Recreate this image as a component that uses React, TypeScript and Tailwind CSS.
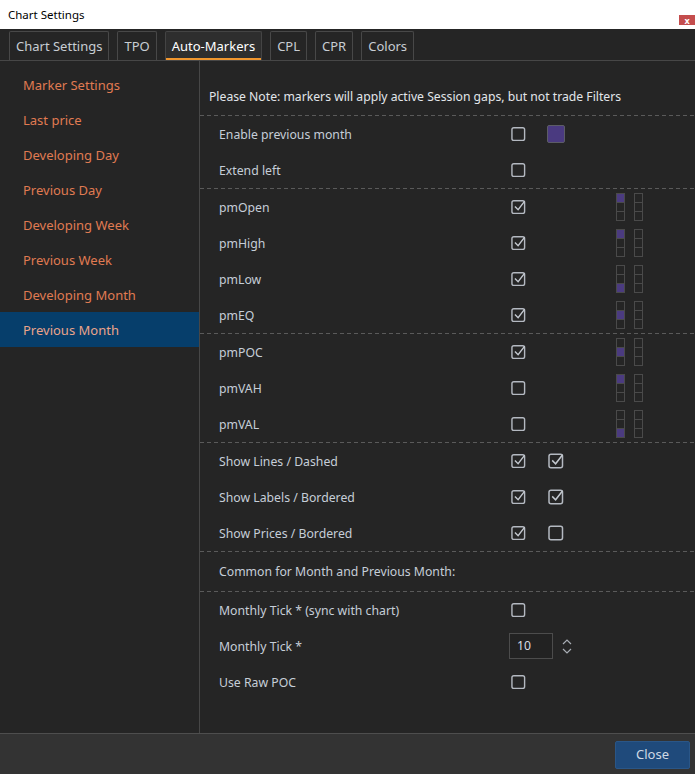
import React from "react";

const font = { fontFamily: '"Segoe UI", "Noto Sans", "Open Sans", sans-serif' };

const sideItems = [
  "Marker Settings",
  "Last price",
  "Developing Day",
  "Previous Day",
  "Developing Week",
  "Previous Week",
  "Developing Month",
  "Previous Month",
];

const tabs = ["Chart Settings", "TPO", "Auto-Markers", "CPL", "CPR", "Colors"];

function Check({ checked }: { checked: boolean }) {
  return (
    <svg width="16" height="16" viewBox="0 0 16 16" className="block">
      <rect x="1" y="1.25" width="13.5" height="13.5" rx="2" fill="none" stroke="#b4b9c1" strokeWidth="1.5" />
      {checked && (
        <polyline points="4.2,7.4 7.6,10.8 14.6,1.8" fill="none" stroke="#c3c8cf" strokeWidth="1.5" />
      )}
    </svg>
  );
}

function Divider() {
  return (
    <div className="h-px w-full bg-[linear-gradient(to_right,#5a5a5a_4px,transparent_4px)] bg-[length:7px_1px]" />
  );
}

function Stack({ filled }: { filled: number }) {
  return (
    <div className="flex flex-col">
      {[0, 1, 2].map((i) => (
        <div
          key={i}
          className={
            "w-[9px] h-[10px] border border-[#4a4a4a] " +
            (i > 0 ? "-mt-px " : "") +
            (i === filled ? "bg-[#4b3b80]" : "")
          }
        />
      ))}
    </div>
  );
}

interface RowProps {
  label: string;
  check?: boolean;
  second?: React.ReactNode;
  stack?: number;
}

function Row({ label, check, second, stack }: RowProps) {
  return (
    <div className="flex items-center h-[36px] pl-[19px]">
      <div className="w-[292px] pt-[2px] text-[12.25px] text-[#c6ced8]">{label}</div>
      <div className="w-[15px] flex justify-center">{check !== undefined && <Check checked={check} />}</div>
      <div className="w-[18px] ml-[21px] flex justify-center">{second}</div>
      {stack !== undefined && (
        <div className="ml-[51px] flex gap-[9px]">
          <Stack filled={stack} />
          <Stack filled={-1} />
        </div>
      )}
    </div>
  );
}

export default function App() {
  return (
    <div style={font} className="w-[695px] h-[774px] flex flex-col bg-[#252525] overflow-hidden">
      {/* title bar */}
      <div className="h-[29px] bg-white flex items-center justify-between pl-[8px] shrink-0">
        <span className="text-[11.5px] text-black">Chart Settings</span>
        <div className="w-[16px] h-[10px] bg-[#c44d4d] flex items-center justify-center text-white text-[9px] font-bold leading-none self-start mt-[15px]">
          x
        </div>
      </div>

      {/* tabs */}
      <div className="h-[32px] flex items-end gap-[8px] pl-[9px] border-b border-[#474747] shrink-0">
        {tabs.map((t) => {
          const active = t === "Auto-Markers";
          return (
            <div
              key={t}
              className={
                "h-[29px] px-[6px] pt-[2px] flex items-center border border-b-0 rounded-t-[2px] text-[13px] " +
                (active
                  ? "bg-[#2e2e2e] border-[#444] text-white shadow-[inset_0_-2px_0_#f0962e]"
                  : "border-[#484848] text-[#c8cdd3]")
              }
            >
              {t}
            </div>
          );
        })}
      </div>

      <div className="flex-1 flex min-h-0">
        {/* sidebar */}
        <div className="w-[200px] shrink-0 border-r border-[#474747] pt-[6px]">
          {sideItems.map((s) => {
            const sel = s === "Previous Month";
            return (
              <div
                key={s}
                className={
                  "h-[35px] flex items-center pl-[23px] pt-[2px] text-[13px] " +
                  (sel ? "bg-[#063e6b] text-[#eba48a]" : "text-[#e07b52]")
                }
              >
                {s}
              </div>
            );
          })}
        </div>

        {/* main */}
        <div className="flex-1 flex flex-col">
          <div className="h-[54px] flex items-end pb-[9px] pl-[9px] text-[12.2px] text-[#e2e6ea]">
            Please Note: markers will apply active Session gaps, but not trade Filters
          </div>
          <Divider />
          <Row
            label="Enable previous month"
            check={false}
            second={<div className="w-[18px] h-[18px] rounded-[2px] bg-[#4a3a80] border border-[#5c5c66]" />}
          />
          <Row label="Extend left" check={false} />
          <Divider />
          <Row label="pmOpen" check={true} stack={0} />
          <Row label="pmHigh" check={true} stack={0} />
          <Row label="pmLow" check={true} stack={2} />
          <Row label="pmEQ" check={true} stack={1} />
          <Divider />
          <Row label="pmPOC" check={true} stack={1} />
          <Row label="pmVAH" check={false} stack={0} />
          <Row label="pmVAL" check={false} stack={2} />
          <Divider />
          <Row label="Show Lines / Dashed" check={true} second={<Check checked={true} />} />
          <Row label="Show Labels / Bordered" check={true} second={<Check checked={true} />} />
          <Row label="Show Prices / Bordered" check={true} second={<Check checked={false} />} />
          <Divider />
          <div className="h-[39px] flex items-center pl-[19px] pt-[2px] text-[12.25px] text-[#c6ced8]">
            Common for Month and Previous Month:
          </div>
          <Divider />
          <Row label="Monthly Tick * (sync with chart)" check={false} />
          <div className="flex items-center h-[36px] pl-[19px]">
            <div className="w-[290px] pt-[2px] text-[12.25px] text-[#c6ced8]">Monthly Tick *</div>
            <div className="w-[44px] h-[26px] border border-[#4c4c4c] bg-[#222] flex items-center pl-[7px] text-[12.25px] text-[#d8dde3]">
              10
            </div>
            <div className="ml-[9px] flex flex-col gap-[3px]">
              <svg width="10" height="6" viewBox="0 0 10 6">
                <polyline points="1,5 5,1 9,5" fill="none" stroke="#a8adb4" strokeWidth="1.2" />
              </svg>
              <svg width="10" height="6" viewBox="0 0 10 6">
                <polyline points="1,1 5,5 9,1" fill="none" stroke="#a8adb4" strokeWidth="1.2" />
              </svg>
            </div>
          </div>
          <Row label="Use Raw POC" check={false} />
        </div>
      </div>

      {/* footer */}
      <div className="h-[41px] shrink-0 bg-[#333333] border-t border-[#4e4e4e] flex items-center justify-end pr-[5px]">
        <button className="w-[75px] h-[28px] mt-[2px] rounded-[2px] bg-[#1f4a7b] border border-[#2a5687] text-[13px] text-[#cfd9e4]">
          Close
        </button>
      </div>
    </div>
  );
}
